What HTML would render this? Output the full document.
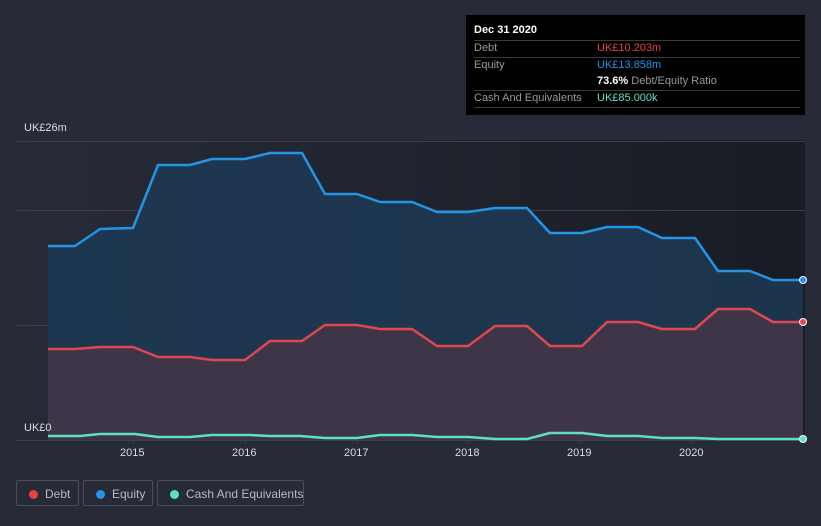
<!DOCTYPE html>
<html><head><meta charset="utf-8"><style>
body{margin:0;width:821px;height:526px;background:#262b37;font-family:"Liberation Sans",sans-serif;overflow:hidden;position:relative}
.tt{position:absolute;left:466px;top:15px;width:339px;height:100px;background:#000;color:#fff;font-size:11px}
.tt .r{position:absolute;left:8px;right:5px;border-top:1px solid #3a3a3a}
.lbl{color:#999}
.leg{position:absolute;top:480px;height:26px;border:1px solid #4a4f5a;border-radius:2px;color:#bbb;font-size:12px;line-height:26px;box-sizing:border-box;white-space:nowrap}
.leg i{position:absolute;left:12px;top:9px;width:9px;height:9px;border-radius:50%}
.leg span{position:absolute;left:28px}
.ax{position:absolute;color:#ddd;font-size:11px}
</style></head><body>
<svg width="821" height="526" style="position:absolute;left:0;top:0">
<defs><linearGradient id="pg" x1="0" x2="1"><stop offset="0" stop-color="#262b37"/><stop offset="1" stop-color="#191c24"/></linearGradient></defs>
<rect x="16" y="140" width="789" height="300" fill="url(#pg)"/>
<g stroke="#3a3f4a" stroke-width="1">
<line x1="16" y1="141.5" x2="805" y2="141.5"/><line x1="16" y1="210.5" x2="805" y2="210.5"/><line x1="16" y1="325.5" x2="805" y2="325.5"/><line x1="16" y1="440.5" x2="805" y2="440.5"/>
<line x1="133.5" y1="440" x2="133.5" y2="444"/><line x1="245.5" y1="440" x2="245.5" y2="444"/><line x1="357.5" y1="440" x2="357.5" y2="444"/><line x1="468.5" y1="440" x2="468.5" y2="444"/><line x1="580.5" y1="440" x2="580.5" y2="444"/><line x1="692.5" y1="440" x2="692.5" y2="444"/>
</g>
<polygon fill="#1d3a55" fill-opacity="0.85" points="48,440 48,246 75,246 100,229 133,228 158,165 190,165 212,159 245,159 270,153 302,153 325,194 357,194 380,202 412,202 437,212 468,212 495,208 527,208 550,233 582,233 607,227 638,227 662,238 695,238 718,271 750,271 773,280 803,280 803,440"/>
<polygon fill="#3e3648" points="48,440 48,349 75,349 100,347 133,347 158,357 190,357 212,360 245,360 270,341 302,341 325,325 357,325 380,329 412,329 437,346 468,346 495,326 527,326 550,346 582,346 607,322 638,322 662,329 695,329 718,309 750,309 773,322 803,322 803,440"/>
<polyline fill="none" stroke="#2394e6" stroke-width="2.5" stroke-linejoin="round" points="48,246 75,246 100,229 133,228 158,165 190,165 212,159 245,159 270,153 302,153 325,194 357,194 380,202 412,202 437,212 468,212 495,208 527,208 550,233 582,233 607,227 638,227 662,238 695,238 718,271 750,271 773,280 803,280"/>
<polyline fill="none" stroke="#e0474f" stroke-width="2.5" stroke-linejoin="round" points="48,349 75,349 100,347 133,347 158,357 190,357 212,360 245,360 270,341 302,341 325,325 357,325 380,329 412,329 437,346 468,346 495,326 527,326 550,346 582,346 607,322 638,322 662,329 695,329 718,309 750,309 773,322 803,322"/>
<polyline fill="none" stroke="#5ee0c8" stroke-width="2.5" stroke-linejoin="round" points="48,436 80,436 100,434 135,434 158,437 190,437 212,435 250,435 270,436 300,436 325,438 357,438 380,435 412,435 437,437 468,437 495,439 527,439 550,433 582,433 607,436 638,436 662,438 695,438 718,439 803,439"/>
<circle cx="803" cy="280" r="3.5" fill="#2394e6" stroke="#fff" stroke-width="1"/>
<circle cx="803" cy="322" r="3.5" fill="#e0474f" stroke="#fff" stroke-width="1"/>
<circle cx="803" cy="439" r="3.5" fill="#5ee0c8" stroke="#fff" stroke-width="1"/>
</svg>
<div class="ax" style="left:24px;top:122px">UK£26m</div>
<div class="ax" style="left:24px;top:422px">UK£0</div>
<div class="ax" style="left:120px;top:447px">2015</div>
<div class="ax" style="left:232px;top:447px">2016</div>
<div class="ax" style="left:344px;top:447px">2017</div>
<div class="ax" style="left:455px;top:447px">2018</div>
<div class="ax" style="left:567px;top:447px">2019</div>
<div class="ax" style="left:679px;top:447px">2020</div>
<div class="tt">
<div style="position:absolute;left:8px;top:9px;font-weight:bold">Dec 31 2020</div>
<div class="r" style="top:25px"></div>
<div class="lbl" style="position:absolute;left:8px;top:27px">Debt</div>
<div style="position:absolute;left:131px;top:27px;color:#e8414a">UK£10.203m</div>
<div class="r" style="top:42px"></div>
<div class="lbl" style="position:absolute;left:8px;top:44px">Equity</div>
<div style="position:absolute;left:131px;top:44px;color:#2394e6">UK£13.858m</div>
<div style="position:absolute;left:131px;top:60px"><b>73.6%</b> <span class="lbl">Debt/Equity Ratio</span></div>
<div class="r" style="top:75px"></div>
<div class="lbl" style="position:absolute;left:8px;top:77px">Cash And Equivalents</div>
<div style="position:absolute;left:131px;top:77px;color:#5ee0c8">UK£85.000k</div>
<div class="r" style="top:92px"></div>
</div>
<div class="leg" style="left:16px;width:63px"><i style="background:#e8414a"></i><span>Debt</span></div>
<div class="leg" style="left:83px;width:70px"><i style="background:#2394e6"></i><span>Equity</span></div>
<div class="leg" style="left:157px;width:147px"><i style="background:#5ee0c8"></i><span>Cash And Equivalents</span></div>
</body></html>
